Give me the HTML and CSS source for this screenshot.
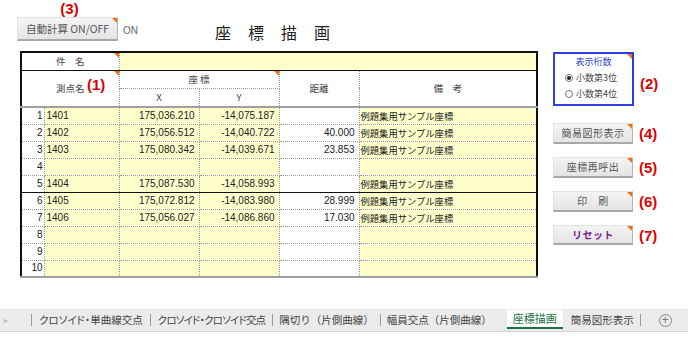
FILE: index.html
```
<!DOCTYPE HTML>
<html>
<head>
	<meta http-equiv="content-type" content="text/html; charset=utf-8" />
	<title>座標描画</title>
	<link rel="stylesheet" href="styles.css">
</head>
<body>
	<div class="sheet">
		<div class="top">
			<div class="auto">
				<div class="num n3">(3)</div>
				<div class="btn btn-auto mark">自動計算 ON/OFF</div>
			</div>
			<div class="on-state">ON</div>
			<h1 class="title">座標描画</h1>
		</div>

		<div class="main">
			<table class="grid">
				<colgroup>
					<col class="c-no"><col class="c-name"><col class="c-x"><col class="c-y"><col class="c-dist"><col class="c-note">
				</colgroup>
				<tr class="r-title">
					<td colspan="2" class="h mark">件　名</td>
					<td colspan="4" class="in"></td>
				</tr>
				<tr class="r-h1">
					<td colspan="2" rowspan="2" class="h hb mark">測点名<span class="num n1">(1)</span></td>
					<td colspan="2" class="h hsub mark">座 標</td>
					<td rowspan="2" class="h hb">距離</td>
					<td rowspan="2" class="h hb last">備　考</td>
				</tr>
				<tr class="r-h2">
					<td class="h hb">X</td>
					<td class="h hb">Y</td>
				</tr>
				<tr><td class="no">1</td><td class="in">1401</td><td class="in v">175,036.210</td><td class="in v">-14,075.187</td><td class="v"></td><td class="in note">例題集用サンプル座標</td></tr>
				<tr><td class="no">2</td><td class="in">1402</td><td class="in v">175,056.512</td><td class="in v">-14,040.722</td><td class="v">40.000</td><td class="in note">例題集用サンプル座標</td></tr>
				<tr><td class="no">3</td><td class="in">1403</td><td class="in v">175,080.342</td><td class="in v">-14,039.671</td><td class="v">23.853</td><td class="in note">例題集用サンプル座標</td></tr>
				<tr><td class="no">4</td><td class="in"></td><td class="in v"></td><td class="in v"></td><td class="v"></td><td class="in note"></td></tr>
				<tr class="split"><td class="no">5</td><td class="in">1404</td><td class="in v">175,087.530</td><td class="in v">-14,058.993</td><td class="v"></td><td class="in note">例題集用サンプル座標</td></tr>
				<tr><td class="no">6</td><td class="in">1405</td><td class="in v">175,072.812</td><td class="in v">-14,083.980</td><td class="v">28.999</td><td class="in note">例題集用サンプル座標</td></tr>
				<tr><td class="no">7</td><td class="in">1406</td><td class="in v">175,056.027</td><td class="in v">-14,086.860</td><td class="v">17.030</td><td class="in note">例題集用サンプル座標</td></tr>
				<tr><td class="no">8</td><td class="in"></td><td class="in v"></td><td class="in v"></td><td class="v"></td><td class="in note"></td></tr>
				<tr><td class="no">9</td><td class="in"></td><td class="in v"></td><td class="in v"></td><td class="v"></td><td class="in note"></td></tr>
				<tr class="end"><td class="no">10</td><td class="in"></td><td class="in v"></td><td class="in v"></td><td class="v"></td><td class="in note"></td></tr>
			</table>

			<div class="side">
				<div class="row">
					<div class="group mark">
						<div class="g-title">表示桁数</div>
						<div class="radio"><span class="dot checked"></span>小数第3位</div>
						<div class="radio"><span class="dot"></span>小数第4位</div>
					</div>
					<div class="num n2">(2)</div>
				</div>
				<div class="row r4">
					<div class="btn mark">簡易図形表示</div>
					<div class="num">(4)</div>
				</div>
				<div class="row r5">
					<div class="btn mark">座標再呼出</div>
					<div class="num">(5)</div>
				</div>
				<div class="row r6">
					<div class="btn mark">印　刷</div>
					<div class="num">(6)</div>
				</div>
				<div class="row r7">
					<div class="btn btn-reset mark">リセット</div>
					<div class="num">(7)</div>
				</div>
			</div>
		</div>
	</div>

	<div class="tabs">
		<span class="arrow">&#9656;</span>
		<span class="sep"></span>
		<span class="tab kana">クロソイド・単曲線交点</span>
		<span class="sep"></span>
		<span class="tab kana t2">クロソイド・クロソイド交点</span>
		<span class="sep"></span>
		<span class="tab">隅切り（片側曲線）</span>
		<span class="sep"></span>
		<span class="tab">幅員交点（片側曲線）</span>
		<span class="tab active">座標描画</span>
		<span class="tab">簡易図形表示</span>
		<span class="sep"></span>
		<span class="plus">+</span>
	</div>
</body>
</html>
```

FILE: styles.css
```
 /* Страница */
* {
	margin: 0;
	padding: 0;
	box-sizing: border-box;
}

html, body {
	width: 100%;
	height: 100%;
	background-color: white;
}

body {
	font-family: "Noto Sans CJK JP", sans-serif;
	color: #333;
	overflow: hidden;
}

.sheet {
	height: 309px;
}

 /* Верх */

.top {
	height: 51px;
	display: flex;
}

.auto {
	margin-left: 17px;
	display: flex;
	flex-direction: column;
	align-items: center;
}

.num {
	font-family: "Liberation Sans", Arial, sans-serif;
	font-weight: bold;
	font-size: 15px;
	color: #e00000;
	line-height: 17px;
}

.n3 {
	height: 17px;
	margin-left: 4px;
}

.on-state {
	font-family: "Liberation Sans", Arial, sans-serif;
	font-size: 10px;
	color: #666;
	margin: 25px 0 0 5px;
}

.title {
	font-size: 16px;
	font-weight: normal;
	color: #222;
	letter-spacing: 17px;
	margin: 22px 0 0 77px;
	line-height: 20px;
}

 /* Кнопки */

.btn {
	position: relative;
	width: 80px;
	height: 21px;
	background: linear-gradient(#f4f4f4, #e4e4e4);
	border: 1px solid #e2e2e2;
	border-right: 1px solid #b4b4b4;
	border-bottom: 2px solid #a8a8a8;
	font-size: 10px;
	color: #555;
	text-align: center;
	line-height: 18px;
	letter-spacing: 0.5px;
}

.btn-auto {
	width: 101px;
	height: 24px;
	line-height: 21px;
	font-size: 10.5px;
	letter-spacing: 0;
}

.btn-reset {
	color: #7a1a8a;
	font-weight: bold;
	line-height: 17px;
}

.mark::after {
	content: "";
	position: absolute;
	top: 0;
	right: 0;
	border-top: 5px solid #f07010;
	border-left: 5px solid transparent;
}

 /* Таблица */

.main {
	display: flex;
	align-items: flex-start;
	padding-left: 20px;
}

.grid {
	border-collapse: collapse;
	table-layout: fixed;
	width: 516px;
	border-top: 2px solid #111;
	border-left: 2px solid #111;
	border-right: 2px solid #111;
	font-family: "Liberation Sans", "Noto Sans CJK JP", sans-serif;
	font-size: 10px;
	color: #222;
}

.c-no { width: 23px; }
.c-name { width: 75px; }
.c-x { width: 80px; }
.c-y { width: 80px; }
.c-dist { width: 80px; }
.c-note { width: 178px; }

.grid td {
	position: relative;
	height: 17px;
	padding: 0 2px;
	border-right: 1px dotted #999;
	border-bottom: 1px dotted #999;
	white-space: nowrap;
	overflow: visible;
	line-height: 14px;
	vertical-align: middle;
}

.grid td.in {
	background-color: #ffffcc;
}

.grid .r-title td {
	height: 18px;
	border-bottom: 1px solid #111;
}

.grid td.h {
	font-family: "Noto Sans CJK JP", sans-serif;
	font-size: 9.5px;
	color: #444;
	text-align: center;
	background-color: white;
}

.grid .r-h1 td {
	height: 18px;
}

.grid .r-h2 td {
	height: 19px;
}

.grid td.hb {
	border-bottom: 2px solid #a0a0a0;
}

.grid td.hsub {
	border-bottom: 1px dotted #999;
}

.grid td.last,
.grid td.note {
	border-right: none;
}

.n1 {
	position: absolute;
	left: 65px;
	top: 5px;
}

.grid td.no {
	text-align: right;
	padding-right: 1px;
}

.grid td.v {
	text-align: right;
	padding-right: 4px;
}

.grid td.note {
	font-family: "Noto Sans CJK JP", sans-serif;
	font-size: 9.3px;
	padding-left: 1px;
}

.grid tr.split td {
	border-bottom: 1px solid #111;
}

.grid tr.end td {
	border-bottom: 2px solid #a0a0a0;
}

 /* Правая панель */

.side {
	margin-left: 15px;
	padding-top: 1px;
	display: flex;
	flex-direction: column;
}

.row {
	display: flex;
	align-items: center;
	gap: 6px;
}

.group {
	position: relative;
	width: 81px;
	height: 54px;
	border: 2px solid #3040e0;
	font-size: 9px;
	color: #444;
}

.g-title {
	color: #3040d0;
	text-align: center;
	margin-top: 2px;
	line-height: 12px;
}

.radio {
	display: flex;
	align-items: center;
	gap: 3px;
	margin: 4px 0 0 10px;
	line-height: 12px;
}

.dot {
	flex: none;
	width: 8px;
	height: 8px;
	border-radius: 50%;
	border: 1px solid #777;
	background: white;
	position: relative;
}

.dot.checked::after {
	content: "";
	position: absolute;
	left: 1px;
	top: 1px;
	width: 4px;
	height: 4px;
	border-radius: 50%;
	background: #222;
}

.n2 {
	margin-top: 8px;
}

.r4 { margin-top: 17px; }
.r5 { margin-top: 13px; }
.r6 { margin-top: 13px; }
.r7 { margin-top: 13px; }

.r7 .btn {
	height: 20px;
}

 /* Вкладки */

.tabs {
	height: 23px;
	background-color: #ebebeb;
	border-bottom: 1px solid #d4d4d4;
	display: flex;
	align-items: stretch;
	font-size: 10.5px;
	color: #444;
}

.arrow {
	width: 31px;
	padding-left: 4px;
	font-size: 8px;
	color: #bbb;
	line-height: 22px;
}

.sep {
	width: 1px;
	margin: 5px 0;
	background-color: #999;
}

.tab {
	padding: 0 6px;
	line-height: 22px;
	white-space: nowrap;
}

.tab.kana {
	font-feature-settings: "palt";
	padding: 0 7px;
}

.tab.t2 {
	letter-spacing: -0.8px;
}

.tab.active {
	background-color: white;
	color: #1e7145;
	border-bottom: 2px solid #1e7145;
	margin: 1px 2px 2px 9px;
	padding: 0 6px;
	font-size: 11px;
	line-height: 17px;
}

.plus {
	margin-left: 18px;
	width: 13px;
	height: 13px;
	margin-top: 5px;
	border: 1px solid #888;
	border-radius: 50%;
	color: #777;
	font-family: "Liberation Sans", Arial, sans-serif;
	font-size: 12px;
	line-height: 11px;
	text-align: center;
}
```
